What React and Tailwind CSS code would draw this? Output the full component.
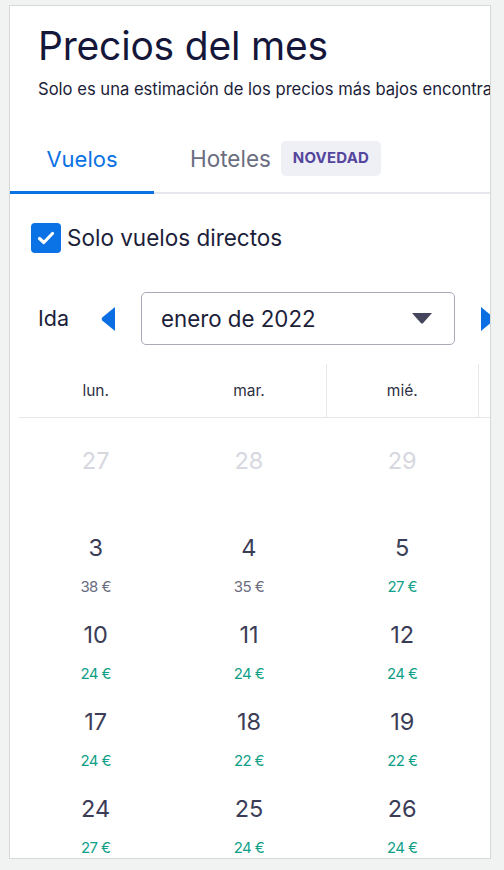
import React from "react";

const font = { fontFamily: "Inter, 'Noto Sans', sans-serif" };

const weeks = [
  [
    { d: 27, muted: true },
    { d: 28, muted: true },
    { d: 29, muted: true },
    { d: 30, muted: true },
    { d: 31, muted: true },
    { d: 1, p: "29 €" },
    { d: 2, p: "31 €" },
  ],
  [
    { d: 3, p: "38 €", dear: true },
    { d: 4, p: "35 €", dear: true },
    { d: 5, p: "27 €" },
    { d: 6, p: "32 €", dear: true },
    { d: 7, p: "27 €" },
    { d: 8, p: "24 €" },
    { d: 9, p: "29 €" },
  ],
  [
    { d: 10, p: "24 €" },
    { d: 11, p: "24 €" },
    { d: 12, p: "24 €" },
    { d: 13, p: "22 €" },
    { d: 14, p: "24 €" },
    { d: 15, p: "22 €" },
    { d: 16, p: "24 €" },
  ],
  [
    { d: 17, p: "24 €" },
    { d: 18, p: "22 €" },
    { d: 19, p: "22 €" },
    { d: 20, p: "22 €" },
    { d: 21, p: "24 €" },
    { d: 22, p: "22 €" },
    { d: 23, p: "24 €" },
  ],
  [
    { d: 24, p: "27 €" },
    { d: 25, p: "24 €" },
    { d: 26, p: "24 €" },
    { d: 27, p: "24 €" },
    { d: 28, p: "27 €" },
    { d: 29, p: "24 €" },
    { d: 30, p: "27 €" },
  ],
];

const days = ["lun.", "mar.", "mié.", "jue.", "vie.", "sáb.", "dom."];

function Arrow({ dir }) {
  return (
    <svg width="14" height="24" viewBox="0 0 14 24" className="shrink-0">
      {dir === "left" ? (
        <path d="M14 0 L14 24 L1.2 13.4 Q0 12 1.2 10.6 Z" fill="#0b6fe3" />
      ) : (
        <path d="M0 0 L0 24 L12.8 13.4 Q14 12 12.8 10.6 Z" fill="#0b6fe3" />
      )}
    </svg>
  );
}

function DayCell({ day }) {
  return (
    <div className="w-[153.3px] shrink-0 h-[87px] flex flex-col items-center">
      <div
        className={`mt-[12px] h-[28px] leading-[28px] text-[23.5px] ${
          day.muted ? "text-[#d6d7df]" : "text-[#3b3d57]"
        }`}
      >
        {day.d}
      </div>
      {day.p && (
        <div
          className={`mt-[16px] h-[18px] leading-[18px] text-[15px] tracking-[-0.6px] ${
            day.dear ? "text-[#6a6c80]" : "text-[#0f9f88]"
          }`}
        >
          {day.p}
        </div>
      )}
    </div>
  );
}

export default function App() {
  return (
    <div className="min-h-[870px] bg-[#f1f2f2] pt-[5px] pl-[9px]" style={font}>
      <div className="w-[482px] h-[854px] bg-white border border-[#d6d7d7] overflow-hidden">
        <div className="pl-[28px] pt-[17px] whitespace-nowrap">
          <h1 className="text-[39px] leading-[46px] text-[#15173a] tracking-[-0.2px]">
            Precios del mes
          </h1>
          <p className="mt-[9px] text-[16.6px] leading-[22px] text-[#1c1e3a]">
            Solo es una estimación de los precios más bajos encontrados
          </p>
        </div>

        <div className="mt-[41px] flex items-end border-b-2 border-[#e6e7ec] whitespace-nowrap">
          <div className="w-[144px] flex flex-col items-center">
            <span className="text-[22px] leading-[30px] text-[#0b72e5] mb-[17px]">
              Vuelos
            </span>
            <div className="h-[3px] w-full bg-[#0b72e5] mb-[-2px]" />
          </div>
          <div className="pl-[36px] flex items-center gap-[10px] mb-[16px]">
            <span className="text-[22.5px] leading-[30px] text-[#6b6d80]">Hoteles</span>
            <span className="h-[35px] w-[100px] rounded-[5px] bg-[#efeff6] flex items-center justify-center text-[15px] font-bold text-[#54469c] tracking-[0.2px]">
              NOVEDAD
            </span>
          </div>
        </div>

        <label className="mt-[29px] ml-[21px] flex items-center gap-[6px]">
          <span className="w-[30px] h-[30px] rounded-[4px] bg-[#0b72e5] flex items-center justify-center">
            <svg width="18" height="14" viewBox="0 0 18 14">
              <path
                d="M2.5 7.5 L6.8 11.5 L15.5 2.5"
                fill="none"
                stroke="#fff"
                strokeWidth="3.2"
                strokeLinecap="round"
                strokeLinejoin="round"
              />
            </svg>
          </span>
          <span className="text-[22.5px] leading-[30px] text-[#1c1e3a] whitespace-nowrap">
            Solo vuelos directos
          </span>
        </label>

        <div className="mt-[39px] ml-[28px] flex items-center whitespace-nowrap">
          <span className="text-[21.5px] text-[#1c1e3a] w-[63px] shrink-0">Ida</span>
          <Arrow dir="left" />
          <div className="ml-[26px] w-[314px] h-[53px] shrink-0 rounded-[5px] border border-[#a9aab9] flex items-center justify-between pl-[19px] pr-[22px]">
            <span className="text-[22.3px] text-[#1c1e3a]">enero de 2022</span>
            <svg width="20" height="11" viewBox="0 0 20 11">
              <path d="M0 0 L20 0 L11.2 10 Q10 11.2 8.8 10 Z" fill="#45465e" />
            </svg>
          </div>
          <div className="ml-[26px]">
            <Arrow dir="right" />
          </div>
        </div>

        <div className="mt-[19px] ml-[9px]">
          <div className="flex border-b border-[#e5e6eb] h-[54px]">
            {days.map((d, i) => (
              <div
                key={d}
                className={`w-[153.3px] shrink-0 flex items-center justify-center text-[15.5px] text-[#2f3146] ${
                  i === 2 ? "border-l border-r border-[#e8e9ed]" : ""
                }`}
              >
                {d}
              </div>
            ))}
          </div>
          <div className="pt-[17px]">
            {weeks.map((w, i) => (
              <div key={i} className="flex">
                {w.map((day, j) => (
                  <DayCell key={j} day={day} />
                ))}
              </div>
            ))}
          </div>
        </div>
      </div>
    </div>
  );
}
